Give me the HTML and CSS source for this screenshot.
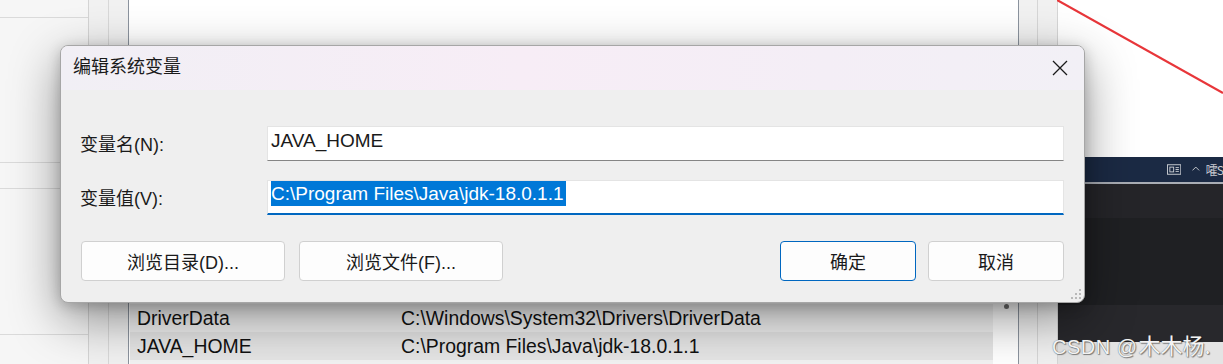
FILE: index.html
```html
<!DOCTYPE html>
<html lang="zh-CN">
<head>
<meta charset="utf-8">
<title>编辑系统变量</title>
<link rel="stylesheet" href="styles.css">
</head>
<body>
<div class="desktop">
  <div class="pane-left">
    <div class="pl pl1"></div>
    <div class="pl pl2"></div>
    <div class="pl pl3"></div>
    <div class="pl pl4"></div>
    <div class="pl pl5"></div>
  </div>
  <div class="strip s1"></div>
  <div class="strip s2"></div>
  <div class="main">
    <div class="main-top"></div>
    <div class="list">
      <div class="rows">
        <div class="row"><span class="name">DriverData</span><span class="val">C:\Windows\System32\Drivers\DriverData</span></div>
        <div class="row row-sel"><span class="name">JAVA_HOME</span><span class="val">C:\Program Files\Java\jdk-18.0.1.1</span></div>
      </div>
      <div class="scroll"><span class="dot"></span></div>
    </div>
  </div>
  <div class="strip s3"></div>
  <div class="strip s4"></div>
  <div class="right">
    <div class="r-top"></div>
    <div class="term">
      <div class="tbar">
        <svg class="ico-kb" width="15" height="11" viewBox="0 0 15 11"><rect x="0.5" y="0.5" width="14" height="10" fill="none" stroke="#c9ccd2"/><rect x="3" y="3" width="4" height="5" fill="none" stroke="#c9ccd2"/><path d="M9 3.5h3.5M9 5.5h3.5M9 7.5h3.5" stroke="#c9ccd2"/></svg>
        <svg class="ico-caret" width="8" height="5" viewBox="0 0 8 5"><path d="M0.5 4.5L4 1L7.5 4.5" fill="none" stroke="#c9ccd2"/></svg>
        <span class="ime">嚯S</span>
      </div>
      <div class="t-line"></div>
      <div class="t1"></div>
      <div class="t2"></div>
      <div class="t3"></div>
    </div>
    <div class="r-bottom"></div>
  </div>
</div>

<svg class="redline" width="166" height="94" viewBox="0 0 166 94"><path d="M0 0L166 93" stroke="#e8363a" stroke-width="2.2" fill="none"/></svg>

<div class="dialog">
  <div class="titlebar">
    <span class="title">编辑系统变量</span>
    <svg class="close" width="16" height="16" viewBox="0 0 16 16"><path d="M1 1L15 15M15 1L1 15" stroke="#1a1a1a" stroke-width="1.3" fill="none"/></svg>
  </div>
  <div class="body">
    <div class="form">
      <span class="label">变量名(N):</span>
      <div class="field"><span class="ftext">JAVA_HOME</span></div>
      <span class="label">变量值(V):</span>
      <div class="field field-focus"><span class="ftext sel">C:\Program Files\Java\jdk-18.0.1.1</span></div>
    </div>
    <div class="buttons">
      <div class="btn-group left">
        <div class="btn wide">浏览目录(D)...</div>
        <div class="btn wide">浏览文件(F)...</div>
      </div>
      <div class="btn-group right-g">
        <div class="btn primary">确定</div>
        <div class="btn">取消</div>
      </div>
    </div>
  </div>
  <svg class="grip" width="12" height="12" viewBox="0 0 12 12"><g fill="#b9b9b9"><rect x="9" y="1" width="2" height="2"/><rect x="5" y="5" width="2" height="2"/><rect x="9" y="5" width="2" height="2"/><rect x="1" y="9" width="2" height="2"/><rect x="5" y="9" width="2" height="2"/><rect x="9" y="9" width="2" height="2"/></g></svg>
</div>

<div class="watermark"><span class="wm-latin">CSDN @</span><span class="wm-cjk">木木杨.</span></div>
</body>
</html>
```

FILE: styles.css
```css
* { box-sizing: border-box; }

html, body {
  margin: 0;
  padding: 0;
}

body {
  width: 1223px;
  height: 364px;
  overflow: hidden;
  position: relative;
  background: #ffffff;
  font-family: "Liberation Sans", "Noto Sans CJK SC", sans-serif;
  color: #1a1a1a;
}

/* ---------- background windows ---------- */
.desktop {
  display: flex;
  height: 364px;
}

.pane-left {
  width: 89px;
  display: flex;
  flex-direction: column;
  background: #f6f6f6;
  border-right: 1px solid #d4d4d4;
}
.pl { border-bottom: 1px solid #dadada; }
.pl1 { height: 18px; }
.pl2 { height: 145px; }
.pl3 { height: 26px; }
.pl4 { height: 146px; }
.pl5 { flex: 1; border-bottom: none; }

.strip { background: #f1f1f1; }
.s1 { width: 20px; border-right: 1px solid #d8d8d8; }
.s2 { width: 20px; border-right: 1px solid #8b939e; }
.s3 { width: 19px; border-right: 1px solid #d6d6d6; }
.s4 { width: 20px; border-right: 1px solid #d6d6d6; }

.main {
  width: 890px;
  display: flex;
  flex-direction: column;
  background: #ffffff;
  border-right: 1px solid #8b939e;
}
.main-top { flex: 1; }
.list {
  display: flex;
  height: 60px;
}
.rows {
  width: 863px;
  margin-left: 1px;
  padding-bottom: 4px;
  background: rgba(0, 0, 0, 0.05);
}
.row {
  display: flex;
  height: 28px;
  align-items: center;
  font-size: 19.4px;
  color: #111;
  padding-left: 7px;
  white-space: nowrap;
}
.row-sel { background: rgba(0, 0, 0, 0.05); }
.name { width: 264px; }
.scroll {
  flex: 1;
  position: relative;
}
.dot {
  position: absolute;
  left: 11px;
  top: 0;
  width: 5px;
  height: 5px;
  border-radius: 50%;
  background: #6f6f6f;
}

.right {
  width: 165px;
  display: flex;
  flex-direction: column;
}
.r-top { height: 157px; background: #ffffff; }
.term { display: flex; flex-direction: column; }
.tbar {
  height: 25px;
  background: #1b2a44;
  display: flex;
  align-items: center;
  padding-left: 109px;
  overflow: hidden;
  white-space: nowrap;
}
.ico-kb { margin-right: 11px; }
.ico-caret { margin-right: 6px; margin-top: -2px; }
.ime {
  font-family: "Noto Sans CJK SC", sans-serif;
  font-size: 12px;
  color: #c9ccd2;
  letter-spacing: -1px;
}
.t-line { height: 2px; background: #a9adb4; }
.t1 { height: 34px; background: #252529; }
.t2 { height: 87px; background: #1f2023; }
.t3 { height: 37px; background: #28282c; }
.r-bottom { flex: 1; background: #e4e4e4; }

.redline {
  position: absolute;
  left: 1057px;
  top: 0;
}

/* ---------- dialog ---------- */
.dialog {
  position: absolute;
  left: 60px;
  top: 45px;
  width: 1025px;
  height: 258px;
  border: 1px solid #a6a6a6;
  border-radius: 8px;
  background: #efefef;
  overflow: hidden;
  box-shadow: 0 16px 50px rgba(0, 0, 0, 0.42), 0 3px 14px rgba(0, 0, 0, 0.2);
}

.titlebar {
  height: 44px;
  display: flex;
  align-items: center;
  justify-content: space-between;
  padding: 0 16px 3px 12px;
  background: linear-gradient(90deg, #f1eff5 0%, #f7edf6 45%, #f4eef6 75%, #f2f0f6 100%);
}
.title {
  font-size: 18px;
  line-height: 22px;
}
.close { display: block; margin-top: 2px; }

.body {
  padding: 36px 20px 0 19px;
}
.form {
  display: grid;
  grid-template-columns: 187px 797px;
  row-gap: 19px;
  align-items: center;
}
.label {
  font-size: 18px;
  line-height: 22px;
  padding-top: 3px;
}
.field {
  height: 35px;
  background: #ffffff;
  border: 1px solid #e4e4e4;
  border-bottom-color: #858585;
  padding: 1px 0 0 3px;
  white-space: nowrap;
}
.field-focus {
  border-bottom: 2px solid #0067c0;
  padding-top: 0;
}
.ftext {
  display: inline-block;
  font-size: 19px;
  line-height: 25px;
}
.sel {
  background: #0078d7;
  color: #ffffff;
  padding-right: 2px;
}

.buttons {
  display: flex;
  justify-content: space-between;
  margin-top: 26px;
  padding: 0 0 0 1px;
}
.btn-group { display: flex; }
.btn-group.left { gap: 14px; }
.btn-group.right-g { gap: 12px; }
.btn {
  width: 136px;
  height: 40px;
  display: flex;
  align-items: center;
  justify-content: center;
  background: #fdfdfd;
  border: 1px solid #d0d0d0;
  border-radius: 4px;
  font-size: 18px;
  color: #1a1a1a;
}
.btn.wide { width: 204px; }
.btn.primary { border-color: #0067c0; }

.grip {
  position: absolute;
  right: 2px;
  bottom: 2px;
}

.watermark {
  position: absolute;
  left: 1052px;
  top: 330px;
  line-height: 28px;
  color: #f3f3f3;
  white-space: nowrap;
  text-shadow: 0 0 1px #555, 1px 1px 1px rgba(0, 0, 0, 0.45);
}
.wm-latin {
  font-family: "Liberation Sans", sans-serif;
  font-size: 20px;
  letter-spacing: 0.5px;
  margin-right: 1px;
}
.wm-cjk {
  font-family: "Noto Sans CJK SC", sans-serif;
  font-size: 22px;
}
```
